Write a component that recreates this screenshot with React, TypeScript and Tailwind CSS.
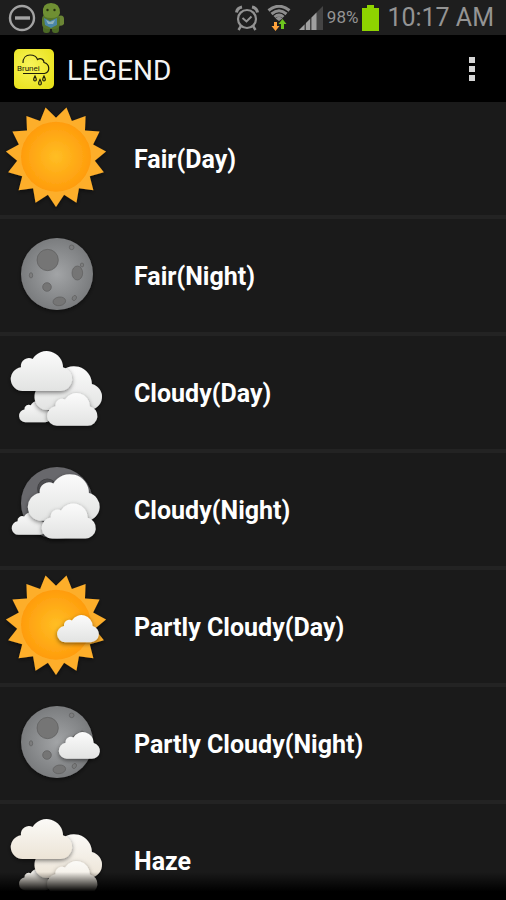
import React from "react";

type Tone = "white" | "cream";

interface CloudProps {
  x: number;
  y: number;
  scale: number;
  tone?: Tone;
}

interface LegendItem {
  label: string;
  icon: React.ReactNode;
}

const CLOUD_PATH =
  "M36 120A36 36 0 0 1 31 48.4A24 24 0 0 1 66 24.2A49 49 0 0 1 157 49A36 36 0 0 1 149 120Z";

// 15 rays, one of them pointing straight down
const SUN_POINTS = Array.from({ length: 30 }, (_, i) => {
  const angle = ((90 + i * 12) * Math.PI) / 180;
  const radius = i % 2 === 0 ? 151 : 117;
  return `${(168 + radius * Math.cos(angle)).toFixed(1)},${(
    164 +
    radius * Math.sin(angle)
  ).toFixed(1)}`;
}).join(" ");

const IconDefs = () => (
  <svg className="absolute size-0" aria-hidden="true">
    <defs>
      <radialGradient id="sun-disc">
        <stop offset="0" stopColor="#ffbe24" />
        <stop offset="1" stopColor="#ff9c0c" />
      </radialGradient>
      <radialGradient id="moon-disc">
        <stop offset="0" stopColor="#a2a4a6" />
        <stop offset="0.5" stopColor="#8e9092" />
        <stop offset="1" stopColor="#7a7c7e" />
      </radialGradient>
      <linearGradient id="cloud-white" x1="0" y1="0" x2="0" y2="1">
        <stop offset="0" stopColor="#fbfbfb" />
        <stop offset="1" stopColor="#e2e3e2" />
      </linearGradient>
      <linearGradient id="cloud-cream" x1="0" y1="0" x2="0" y2="1">
        <stop offset="0" stopColor="#fbfaf7" />
        <stop offset="1" stopColor="#ece4d6" />
      </linearGradient>
      <filter id="shadow" x="-20%" y="-20%" width="140%" height="150%">
        <feDropShadow dx="0" dy="5" stdDeviation="6" floodColor="#000" floodOpacity="0.5" />
      </filter>
    </defs>
  </svg>
);

const Cloud: React.FC<CloudProps> = ({ x, y, scale, tone = "white" }) => (
  <g filter="url(#shadow)">
    <path
      d={CLOUD_PATH}
      transform={`translate(${x} ${y}) scale(${scale})`}
      fill={tone === "cream" ? "url(#cloud-cream)" : "url(#cloud-white)"}
    />
  </g>
);

const Sun = () => (
  <g filter="url(#shadow)">
    <polygon points={SUN_POINTS} fill="#fdae2c" />
    <circle cx="168" cy="164" r="105" fill="url(#sun-disc)" />
  </g>
);

const Moon = () => (
  <g filter="url(#shadow)">
    <circle cx="171" cy="165" r="108" fill="url(#moon-disc)" />
    <g fill="#747474" stroke="#5e5e5e" strokeWidth="2">
      <circle cx="143" cy="123" r="32" />
      <ellipse cx="232" cy="162" rx="16" ry="21" />
      <circle cx="141" cy="204" r="13" />
      <ellipse cx="178" cy="247" rx="19" ry="13" transform="rotate(-8 178 247)" />
      <circle cx="215" cy="85" r="7" fillOpacity="0.4" />
      <ellipse cx="246" cy="138" rx="5" ry="6" fillOpacity="0.6" />
      <ellipse cx="93" cy="169" rx="5" ry="8" fillOpacity="0.6" />
      <ellipse cx="223" cy="237" rx="6" ry="8" transform="rotate(30 223 237)" fillOpacity="0.6" />
    </g>
  </g>
);

// The moon as it looks behind an overcast sky
const DimMoon = () => (
  <g filter="url(#shadow)">
    <circle cx="171" cy="150" r="108" fill="#68686c" />
    <circle cx="142" cy="107" r="29" fill="#505053" stroke="#414144" strokeWidth="3" />
  </g>
);

const CloudGroup: React.FC<{ tone?: Tone }> = ({ tone }) => (
  <>
    <Cloud x={57} y={195} scale={0.53} tone={tone} />
    <Cloud x={103} y={90} scale={1.1} tone={tone} />
    <Cloud x={141} y={171} scale={0.82} tone={tone} />
    <Cloud x={32} y={45} scale={1} tone={tone} />
  </>
);

const LEGEND: LegendItem[] = [
  { label: "Fair(Day)", icon: <Sun /> },
  { label: "Fair(Night)", icon: <Moon /> },
  { label: "Cloudy(Day)", icon: <CloudGroup /> },
  {
    label: "Cloudy(Night)",
    icon: (
      <>
        <DimMoon />
        <Cloud x={35} y={177} scale={0.57} />
        <Cloud x={83} y={63} scale={1.17} />
        <Cloud x={125} y={151} scale={0.88} />
      </>
    ),
  },
  {
    label: "Partly Cloudy(Day)",
    icon: (
      <>
        <Sun />
        <Cloud x={171} y={135} scale={0.68} />
      </>
    ),
  },
  {
    label: "Partly Cloudy(Night)",
    icon: (
      <>
        <Moon />
        <Cloud x={176} y={135} scale={0.67} />
      </>
    ),
  },
  { label: "Haze", icon: <CloudGroup tone="cream" /> },
];

const StatusBar = () => (
  <div className="flex h-[35px] shrink-0 items-center justify-between bg-[#1e1e1e] pr-3 pl-2 text-[#949494]">
    <div className="flex items-center gap-1">
      <svg className="size-7" viewBox="0 0 28 28" fill="none" stroke="#a3a3a3">
        <circle cx="14" cy="14" r="12" strokeWidth="2.4" />
        <path d="M7 14H22" strokeWidth="3.4" />
      </svg>
      <svg className="h-[30px] w-6" viewBox="0 0 24 30">
        <path d="M18 13q6-2 6 3v5q-2 3-6 1z" fill="#6b8535" />
        <rect x="3" y="22" width="7" height="8" rx="3" fill="#4c6a26" />
        <rect x="12" y="22" width="7" height="8" rx="3" fill="#4c6a26" />
        <rect x="2" y="11" width="18" height="15" rx="5" fill="#56752b" />
        <path d="M3 10Q2 0 11 0T20 10Q19 15 11 15T3 10Z" fill="#6f8f33" />
        <path d="M4 15l6 3 7-3v7l-6 3-6-3z" fill="#4a86a8" />
        <path d="M6 17l4 2 5-2-2 4H8z" fill="#8fb2bb" />
        <circle cx="7.500" cy="7" r="1.200" fill="#26300f" />
        <circle cx="14.500" cy="7" r="1.200" fill="#26300f" />
      </svg>
    </div>
    <div className="flex items-center">
      <svg className="mr-2 h-[26px] w-6" viewBox="0 0 24 26" fill="none" stroke="#929292">
        <circle cx="12" cy="14" r="9" strokeWidth="2.2" />
        <path d="M7.500 13l4 3.500 5-5" strokeWidth="2" />
        <path d="M1.500 7.500Q2 3 7 2M22.500 7.500Q22 3 17 2" strokeWidth="3" />
        <path d="M6 21l-2.500 4M18 21l2.500 4" strokeWidth="2.400" />
      </svg>
      <svg className="mr-2 h-[26px] w-6" viewBox="0 0 24 26">
        <g fill="none" stroke="#8e8e8e" strokeWidth="3">
          <path d="M1.500 5.500Q12-3 22.500 5.500" />
          <path d="M4.500 9Q12 2.500 19.500 9" />
          <path d="M7.500 12Q12 8 16.500 12" />
        </g>
        <path d="M8.500 13.500L12 11l3.500 2.500L12 16z" fill="#8e8e8e" />
        <path d="M7 17h3v4h2.500L8.500 26l-4-5H7z" fill="#ffa33c" />
        <path d="M14 24v-5h-2.500l4-5 4 5H17v5z" fill="#6cc51e" />
      </svg>
      <svg className="mr-1 h-6 w-6" viewBox="0 0 24 24">
        <path d="M0 24L24 0V24Z" fill="#444" />
        <path d="M0 24L5.500 18.500V24ZM7 24V17L11 13V24ZM12.500 24V11.500L17.500 6.500V24Z" fill="#a0a0a0" />
      </svg>
      <span className="mr-1 text-[17px] leading-none">98%</span>
      <svg className="mr-2 h-[26px] w-[17px]" viewBox="0 0 17 26">
        <path d="M5 0h7v3h5v23H0V3h5z" fill="#8fd400" />
      </svg>
      <span className="text-[25px] leading-none whitespace-nowrap">10:17 AM</span>
    </div>
  </div>
);

const AppLogo = () => (
  <svg className="size-10" viewBox="0 0 40 40" role="img" aria-label="Brunei weather">
    <defs>
      <radialGradient id="logo-bg" cx="0.4" cy="0.4" r="0.7">
        <stop offset="0" stopColor="#f8f45a" />
        <stop offset="1" stopColor="#e9e21c" />
      </radialGradient>
    </defs>
    <rect width="40" height="40" rx="5" fill="url(#logo-bg)" />
    <g fill="none" stroke="#1d1d0a" strokeWidth="1.200">
      <path d="M9 14C9 9 12 6 16 6C20 6 22.500 7.500 23.500 10.500C27 8.500 30 10.500 30 13.500C36 15 36.500 23 30.500 24.500H9" />
      <path d="M21 27C19 30.500 19.500 32 21 32S23 30.500 21 27ZM26 30.500C24 34 24.500 36 26 36S28 34 26 30.500ZM30 27C28 30.500 28.500 32 30 32S32 30.500 30 27Z" />
    </g>
    <text x="3" y="22" className="font-[Roboto,sans-serif] text-[8px]" fill="#1d1d0a">
      Brunei
    </text>
  </svg>
);

const ActionBar = () => (
  <header className="flex h-[67px] shrink-0 items-center bg-black pr-5 pl-[14px]">
    <AppLogo />
    <h1 className="ml-[13px] flex-1 pt-1 text-[28px] leading-8 text-[#f3f3f3]">LEGEND</h1>
    <button
      type="button"
      aria-label="More options"
      className="flex h-12 w-7 flex-col items-center justify-center gap-[3px]"
    >
      <span className="size-[6px] bg-[#d6d6d6]" />
      <span className="size-[6px] bg-[#d6d6d6]" />
      <span className="size-[6px] bg-[#d6d6d6]" />
    </button>
  </header>
);

const LegendRow: React.FC<{ item: LegendItem }> = ({ item }) => (
  <li className="flex h-[117px] items-center border-b-4 border-[#232323]">
    <svg className="h-[113px] w-[120px] shrink-0" viewBox="0 0 360 339" aria-hidden="true">
      {item.icon}
    </svg>
    <span className="pt-[2px] pl-[14px] text-[25px] leading-8 font-bold text-white">
      {item.label}
    </span>
  </li>
);

const App: React.FC = () => (
  <div className="relative flex h-screen flex-col overflow-hidden bg-[#1a1a1a] font-[Roboto,sans-serif]">
    <IconDefs />
    <StatusBar />
    <ActionBar />
    <main className="min-h-0 flex-1 overflow-hidden">
      <ul>
        {LEGEND.map((item) => (
          <LegendRow key={item.label} item={item} />
        ))}
      </ul>
    </main>
    <div className="pointer-events-none absolute inset-x-0 bottom-0 h-7 bg-linear-to-b from-transparent to-black to-70%" />
  </div>
);

export default App;
